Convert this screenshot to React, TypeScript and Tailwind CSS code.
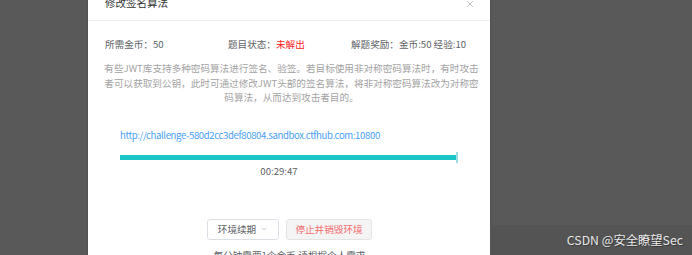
import { ChevronDown, X } from 'lucide-react';

const cjk = { fontFamily: '"Noto Sans CJK SC", "Noto Sans", sans-serif' };

const ProgressBar = () => (
  <div className="relative mt-[12px] h-[5px] w-[337px] bg-[#1bc5c5]">
    <div className="absolute top-[-3px] right-[-1px] h-[11px] w-[2px] bg-[#9edfe6]" />
  </div>
);

export default function App() {
  return (
    <div className="flex h-[255px] w-[692px] overflow-hidden bg-[#595959]" style={cjk}>
      <div className="w-[88px] shrink-0" />
      <div className="flex w-[402px] shrink-0 flex-col bg-white shadow-[0_0_2px_rgba(0,0,0,0.25)]">
        <div className="flex h-[21px] shrink-0 items-start justify-between border-b border-[#ebeef5] pr-[15px] pl-[17px]">
          <span className="-mt-[3px] text-[10.5px] leading-[12px] text-[#303133]">修改签名算法</span>
          <X className="-mt-[1px] h-[10px] w-[10px] text-[#909399]" strokeWidth={1.5} />
        </div>

        <div className="flex flex-col px-[16px] pl-[17px]">
          <div className="mt-[16px] grid grid-cols-3 text-[9.6px] leading-[14.5px] text-[#606266]">
            <span>所需金币：50</span>
            <span>
              题目状态：<span className="text-[#ff2020]">未解出</span>
            </span>
            <span className="whitespace-nowrap">解题奖励：金币:50 经验:10</span>
          </div>

          <p className="mt-[9.5px] -mr-[10px] -ml-[6px] whitespace-nowrap text-center text-[9.6px] leading-[14.5px] text-[#a3a3a3]">
            有些JWT库支持多种密码算法进行签名、验签。若目标使用非对称密码算法时，有时攻击
            <br />
            者可以获取到公钥，此时可通过修改JWT头部的签名算法，将非对称密码算法改为对称密
            <br />
            码算法，从而达到攻击者目的。
          </p>

          <div className="mt-[23.5px] flex flex-col pl-[15px]">
            <span className="whitespace-nowrap text-[9.6px] leading-[14.5px] tracking-[-0.38px] text-[#4a9ff5]">
              http://challenge-580d2cc3def80804.sandbox.ctfhub.com:10800
            </span>
            <ProgressBar />
            <span className="mt-[4px] w-[318px] text-center text-[9.6px] leading-[14.5px] text-[#606266]">
              00:29:47
            </span>
          </div>

          <div className="mt-[40.5px] flex justify-center gap-[7px]">
            <button className="flex h-[21px] w-[72px] items-center justify-center gap-[4px] rounded-[3px] border border-[#dcdfe6] bg-white text-[9.6px] text-[#606266]">
              环境续期
              <ChevronDown className="h-[8px] w-[8px] text-[#909399]" strokeWidth={1.5} />
            </button>
            <button className="flex h-[21px] w-[86px] items-center justify-center rounded-[3px] border border-[#e4e4e4] bg-[#f4f4f5] text-[9.6px] text-[#f56c6c]">
              停止并销毁环境
            </button>
          </div>

          <p className="mt-[8px] text-center text-[9.6px] leading-[14.5px] text-[#606266]">
            每分钟需要1个金币,请根据个人需求
          </p>
        </div>
      </div>

      <div className="flex flex-1 flex-col">
        <div className="flex-1" />
        <div className="flex h-[30px] items-center justify-end bg-[#545454] pr-[9px]">
          <span className="text-[12.3px] leading-[15px] text-[#e8e8e8] [text-shadow:1px_1px_0_#3a3a3a]">
            CSDN @安全瞭望Sec
          </span>
        </div>
      </div>
    </div>
  );
}
